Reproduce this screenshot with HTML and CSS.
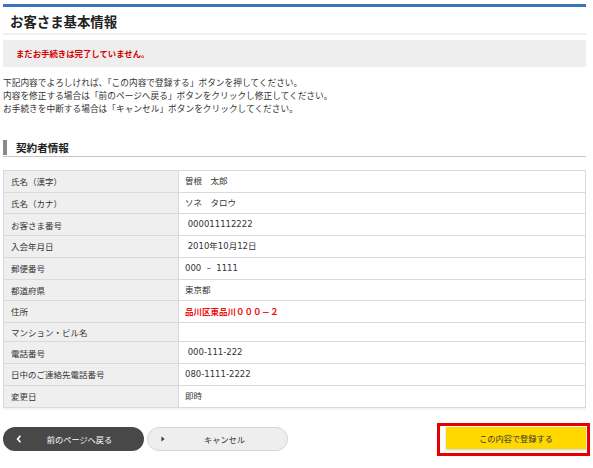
FILE: index.html
```html
<!DOCTYPE html>
<html lang="ja">
<head>
<meta charset="utf-8">
<title>お客さま基本情報</title>
<link rel="stylesheet" href="styles.css">
</head>
<body>
<div class="page">
  <div class="topbar"></div>
  <h1 class="title">お客さま基本情報</h1>
  <div class="notice">まだお手続きは完了していません。</div>
  <div class="intro">
    <p>下記内容でよろしければ、「この内容で登録する」ボタンを押してください。</p>
    <p>内容を修正する場合は「前のページへ戻る」ボタンをクリックし修正してください。</p>
    <p>お手続きを中断する場合は「キャンセル」ボタンをクリックしてください。</p>
  </div>
  <h2 class="section"><span class="section-label">契約者情報</span></h2>
  <table class="info">
    <tr><th>氏名（漢字）</th><td>曽根　太郎</td></tr>
    <tr><th>氏名（カナ）</th><td>ソネ　タロウ</td></tr>
    <tr><th>お客さま番号</th><td>&nbsp;000011112222</td></tr>
    <tr><th>入会年月日</th><td>&nbsp;2010年10月12日</td></tr>
    <tr><th>郵便番号</th><td>000 &nbsp;–&nbsp; 1111</td></tr>
    <tr><th>都道府県</th><td>東京都</td></tr>
    <tr><th>住所</th><td class="red">品川区東品川０００－２</td></tr>
    <tr><th>マンション・ビル名</th><td></td></tr>
    <tr><th>電話番号</th><td>&nbsp;000-111-222</td></tr>
    <tr><th>日中のご連絡先電話番号</th><td>080-1111-2222</td></tr>
    <tr><th>変更日</th><td>即時</td></tr>
  </table>
  <div class="actions">
    <div class="left-actions">
      <button class="btn btn-back" type="button">
        <svg class="ico" width="6" height="8" viewBox="0 0 6 8"><path d="M4.5 0.8 L1.6 4 L4.5 7.2" fill="none" stroke="#fff" stroke-width="1.6"/></svg>
        <span>前のページへ戻る</span>
      </button>
      <button class="btn btn-cancel" type="button">
        <svg class="ico" width="4" height="6" viewBox="0 0 4 6"><path d="M0.5 0.5 L3.5 3 L0.5 5.5 Z" fill="#333"/></svg>
        <span>キャンセル</span>
      </button>
    </div>
    <div class="right-actions">
      <button class="btn btn-submit" type="button">この内容で登録する</button>
      <div class="highlight"></div>
    </div>
  </div>
</div>
</body>
</html>
```

FILE: styles.css
```css
* { box-sizing: border-box; }
html, body { margin: 0; padding: 0; background: #fff; }
body {
  font-family: "Noto Sans CJK JP", "Noto Sans", sans-serif;
  color: #333;
  min-height: 468px;
}
.page {
  margin-left: 3px;
  width: 583px;
  padding-top: 4px;
  padding-bottom: 12px;
}
.topbar {
  height: 3px;
  background: #3a76bf;
}
.title {
  margin: 0;
  height: 28px;
  padding-left: 7px;
  font-size: 13.4px;
  line-height: 28px;
  font-weight: bold;
  color: #222;
  border-bottom: 2px solid #efefef;
}
.notice {
  margin-top: 5px;
  height: 27px;
  line-height: 27px;
  padding-left: 13px;
  background: #eeeeee;
  color: #d40000;
  font-size: 8.4px;
  font-weight: bold;
}
.intro {
  margin-top: 9px;
  font-size: 8.7px;
  line-height: 13px;
  color: #333;
}
.intro p { margin: 0; }
.section {
  margin: 25px 0 0 0;
  font-size: 10.6px;
  font-weight: bold;
  color: #222;
  border-bottom: 1px solid #c4c4c4;
  padding-bottom: 1px;
}
.section-label {
  display: block;
  border-left: 4px solid #8a8a8a;
  padding-left: 9px;
  height: 15px;
  line-height: 15px;
}
.info {
  margin-top: 13px;
  width: 583px;
  border-collapse: collapse;
  border: 1px solid #dadada;
  font-size: 8.5px;
  box-shadow: 0 2px 0 #f4f4f4;
}
.info th, .info td {
  border: 1px solid #dadada;
  padding: 0;
  text-align: left;
  font-weight: normal;
  vertical-align: middle;
}
.info th {
  width: 175px;
  background: #efefef;
  padding-left: 7px;
  line-height: 18.5px;
  color: #333;
}
.info td {
  background: #fff;
  padding-left: 6px;
  line-height: 20.7px;
  color: #333;
  font-family: "DejaVu Sans", "Noto Sans CJK JP", sans-serif;
}
.info td.red {
  color: #f01010;
  font-weight: bold;
  font-family: "Noto Sans CJK JP", sans-serif;
}
.actions {
  margin-top: 19px;
  display: flex;
  justify-content: space-between;
  align-items: flex-start;
}
.left-actions {
  display: flex;
  gap: 3px;
}
.btn {
  font-family: "Noto Sans CJK JP", "Noto Sans", sans-serif;
  font-size: 8.2px;
  border: none;
  margin: 0;
  padding: 0;
  cursor: pointer;
}
.btn-back, .btn-cancel {
  position: relative;
  width: 141px;
  height: 24px;
  border-radius: 12px;
  display: flex;
  align-items: center;
  justify-content: center;
  padding-left: 12px;
}
.btn-back {
  background: #484848;
  color: #fff;
}
.btn-cancel {
  background: #eeeeee;
  border: 1px solid #d6d6d6;
  color: #333;
  padding-left: 14px;
}
.ico {
  position: absolute;
  top: 50%;
  transform: translateY(-50%);
}
.btn-back .ico { left: 13px; }
.btn-cancel .ico { left: 13px; }
.right-actions {
  position: relative;
  padding-top: 0.3px;
}
.btn-submit {
  display: block;
  width: 140px;
  height: 22px;
  background: #ffd800;
  color: #333;
  box-shadow: 0 1px 2px rgba(0,0,0,0.2);
}
.highlight {
  position: absolute;
  left: -9px;
  top: -4px;
  width: 153px;
  height: 33px;
  border: 3.5px solid #e80000;
  pointer-events: none;
}
```
